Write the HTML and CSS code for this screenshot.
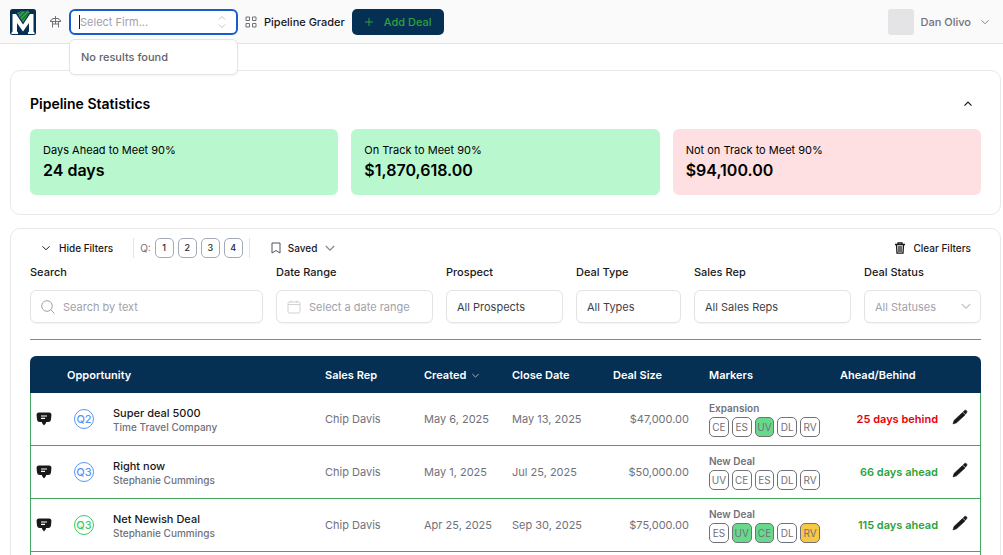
FILE: index.html
```
<!DOCTYPE html>
<html lang="en">
<head>
    <meta charset="UTF-8">
    <meta name="viewport" content="width=device-width, initial-scale=1.0">
    <title>Pipeline Grader</title>
    <link rel="stylesheet" href="styles.css">
</head>
<body>
    <svg class="sprite" aria-hidden="true">
        <symbol id="chevron" viewBox="0 0 10 10"><path d="M1.500 3.300 L5 6.800 L8.500 3.300"/></symbol>
        <symbol id="comment" viewBox="0 0 16 14">
            <path d="M3 .5 H13 Q15.600 .5 15.400 3.200 L15 7.400 Q14.700 10 12.200 10 H10 V11 L8 13.500 L6 11 V10 H3.800 Q1.300 10 1 7.400 L.6 3.200 Q.4 .5 3 .5Z" fill="#18181b"/>
            <path d="M5 4 H11 M5 6.300 H9" stroke="#fff" stroke-width="1.200" fill="none"/>
        </symbol>
        <symbol id="pencil" viewBox="0 0 16 16">
            <path d="M1 15 L2 11.500 L10.500 3.500 L13 6 L4.500 13.800Z M11.200 2.900 L12.600 1.500 Q13.600 .8 14.500 1.700 Q15.400 2.600 14.700 3.600 L13.500 5.200Z" fill="#18181b" stroke="#18181b" stroke-width=".6"/>
        </symbol>
    </svg>

    <header class="topbar">
        <a href="#" class="logo" aria-label="Home">
            <svg width="26" height="26" viewBox="0 0 26 26">
                <rect width="26" height="26" rx="2.500" fill="#062f54"/>
                <path d="M2.500 5 H6 L13 15.500 L20 5 H23.500 V22.500 L24.500 23.500 V25 H18 V23.500 L19 22.500 V14 L13 22.500 L7 14 V22.500 L8 23.500 V25 H1.500 V23.500 L2.500 22.500Z" fill="#fff"/>
                <path d="M7 4 L13 13.500 L19.500 3.500 L18 1.500 L14 2.500 L12 1.500 L9.500 3Z" fill="#2f9e3f"/>
                <path d="M8 6 L13 1.500 M9.700 8.700 L17 1.500 M11.500 11.300 L18.500 4" stroke="#062f54" stroke-width=".8"/>
            </svg>
        </a>
        <svg class="nav-icon" width="13" height="14" viewBox="0 0 13 14">
            <path d="M6.500 1 V3.500 M3.500 3.500 H9.500 M1 5.500 Q3.500 5.500 3.500 3.500 M12 5.500 Q9.500 5.500 9.500 3.500 M1 6.500 H12 M3.500 6.500 V12.500 M9.500 6.500 V12.500 M6.500 3.500 V9 M3.500 9 H9.500"/>
        </svg>
        <div class="firm">
            <input type="text" class="firm-input" placeholder="Select Firm..." aria-label="Select Firm">
            <svg class="firm-arrows" width="10" height="14" viewBox="0 0 10 14"><path d="M2 4.500 L5 1.500 L8 4.500 M2 9.500 L5 12.500 L8 9.500"/></svg>
            <div class="firm-menu">No results found</div>
        </div>
        <svg class="nav-icon" width="12" height="12" viewBox="0 0 12 12">
            <path d="M1 1 H4.500 V4.500 H1Z M7.500 1 H11 V4.500 H7.500Z M1 7.500 H4.500 V11 H1Z M7.500 7.500 H11 V11 H7.500Z"/>
        </svg>
        <a href="#" class="nav-link">Pipeline Grader</a>
        <button type="button" class="add-btn">
            <svg width="10" height="10" viewBox="0 0 10 10"><path d="M5 1 V9 M1 5 H9"/></svg>
            Add Deal
        </button>
        <button type="button" class="user">
            <span class="avatar"></span>
            Dan Olivo
            <svg class="chev" width="10" height="10"><use href="#chevron"/></svg>
        </button>
    </header>

    <main>
        <section class="card stats-card">
            <div class="card-head">
                <h2>Pipeline Statistics</h2>
                <button type="button" class="collapse" aria-label="Collapse">
                    <svg class="chev up" width="10" height="10"><use href="#chevron"/></svg>
                </button>
            </div>
            <div class="stats">
                <div class="stat good"><p>Days Ahead to Meet 90%</p><strong>24 days</strong></div>
                <div class="stat good"><p>On Track to Meet 90%</p><strong>$1,870,618.00</strong></div>
                <div class="stat bad"><p>Not on Track to Meet 90%</p><strong>$94,100.00</strong></div>
            </div>
        </section>

        <section class="card deals-card">
            <div class="toolbar">
                <button type="button" class="tool hide-btn">
                    <svg class="chev dark" width="10" height="10"><use href="#chevron"/></svg>
                    Hide Filters
                </button>
                <div class="quarters">
                    <span>Q:</span>
                    <button type="button">1</button>
                    <button type="button">2</button>
                    <button type="button">3</button>
                    <button type="button">4</button>
                </div>
                <button type="button" class="tool saved-btn">
                    <svg width="10" height="12" viewBox="0 0 10 12"><path d="M1 1 H9 V11 L5 8.500 L1 11Z" fill="none" stroke="#52525b"/></svg>
                    Saved
                    <svg class="chev" width="12" height="12"><use href="#chevron"/></svg>
                </button>
                <button type="button" class="tool clear-btn">
                    <svg width="10" height="12" viewBox="0 0 10 12"><path d="M0 2.500 H10 M3 2.500 V.8 H7 V2.500 M1.500 3 L2 11.200 H8 L8.500 3 M4 4 V10 M6 4 V10" fill="none" stroke="#18181b" stroke-width="1.300"/></svg>
                    Clear Filters
                </button>
            </div>

            <form class="filters">
                <div class="field">
                    <label for="search">Search</label>
                    <div class="control">
                        <svg width="14" height="14" viewBox="0 0 14 14"><circle cx="6" cy="6" r="5.300"/><path d="M9.900 9.900 L13.500 13.500"/></svg>
                        <input type="text" id="search" class="with-icon" placeholder="Search by text">
                    </div>
                </div>
                <div class="field">
                    <label for="dates">Date Range</label>
                    <div class="control">
                        <svg class="light" width="14" height="14" viewBox="0 0 14 14"><rect x="1" y="2" width="12" height="11" rx="1.500"/><path d="M1 4.500 H13 M4 .5 V3 M10 .5 V3"/></svg>
                        <input type="text" id="dates" class="with-icon" placeholder="Select a date range">
                    </div>
                </div>
                <div class="field">
                    <label for="prospect">Prospect</label>
                    <select id="prospect"><option>All Prospects</option></select>
                </div>
                <div class="field">
                    <label for="type">Deal Type</label>
                    <select id="type"><option>All Types</option></select>
                </div>
                <div class="field">
                    <label for="rep">Sales Rep</label>
                    <select id="rep"><option>All Sales Reps</option></select>
                </div>
                <div class="field">
                    <label for="status">Deal Status</label>
                    <div class="control">
                        <select id="status" class="muted"><option>All Statuses</option></select>
                        <svg class="chev caret" width="12" height="12"><use href="#chevron"/></svg>
                    </div>
                </div>
            </form>

            <table class="deals">
                <colgroup>
                    <col class="c-note"><col><col class="c-rep"><col class="c-created"><col class="c-close">
                    <col class="c-size"><col class="c-markers"><col class="c-ahead"><col class="c-edit">
                </colgroup>
                <thead>
                    <tr>
                        <th></th>
                        <th>Opportunity</th>
                        <th>Sales Rep</th>
                        <th>Created <svg class="chev" width="9" height="9"><use href="#chevron"/></svg></th>
                        <th>Close Date</th>
                        <th>Deal Size</th>
                        <th>Markers</th>
                        <th>Ahead/Behind</th>
                        <th></th>
                    </tr>
                </thead>
                <tbody>
                    <tr>
                        <td class="note"><svg width="16" height="14"><use href="#comment"/></svg></td>
                        <td><div class="opp"><span class="quarter">Q2</span><div><b>Super deal 5000</b><small>Time Travel Company</small></div></div></td>
                        <td>Chip Davis</td>
                        <td>May 6, 2025</td>
                        <td>May 13, 2025</td>
                        <td class="num">$47,000.00</td>
                        <td><div class="kind">Expansion</div><div class="markers"><span>CE</span><span>ES</span><span class="on">UV</span><span>DL</span><span>RV</span></div></td>
                        <td class="num behind">25 days behind</td>
                        <td class="edit"><button type="button" aria-label="Edit"><svg width="16" height="16"><use href="#pencil"/></svg></button></td>
                    </tr>
                    <tr>
                        <td class="note"><svg width="16" height="14"><use href="#comment"/></svg></td>
                        <td><div class="opp"><span class="quarter">Q3</span><div><b>Right now</b><small>Stephanie Cummings</small></div></div></td>
                        <td>Chip Davis</td>
                        <td>May 1, 2025</td>
                        <td>Jul 25, 2025</td>
                        <td class="num">$50,000.00</td>
                        <td><div class="kind">New Deal</div><div class="markers"><span>UV</span><span>CE</span><span>ES</span><span>DL</span><span>RV</span></div></td>
                        <td class="num ahead">66 days ahead</td>
                        <td class="edit"><button type="button" aria-label="Edit"><svg width="16" height="16"><use href="#pencil"/></svg></button></td>
                    </tr>
                    <tr>
                        <td class="note"><svg width="16" height="14"><use href="#comment"/></svg></td>
                        <td><div class="opp"><span class="quarter green">Q3</span><div><b>Net Newish Deal</b><small>Stephanie Cummings</small></div></div></td>
                        <td>Chip Davis</td>
                        <td>Apr 25, 2025</td>
                        <td>Sep 30, 2025</td>
                        <td class="num">$75,000.00</td>
                        <td><div class="kind">New Deal</div><div class="markers"><span>ES</span><span class="on">UV</span><span class="on">CE</span><span>DL</span><span class="warn">RV</span></div></td>
                        <td class="num ahead">115 days ahead</td>
                        <td class="edit"><button type="button" aria-label="Edit"><svg width="16" height="16"><use href="#pencil"/></svg></button></td>
                    </tr>
                    <tr><td colspan="9"></td></tr>
                </tbody>
            </table>
        </section>
    </main>
</body>
</html>
```
FILE: styles.css
```
* {
    box-sizing: border-box;
}
html {
    scrollbar-width: none;
}
body {
    margin: 0;
    background: #fff;
    color: #18181b;
    font-family: Inter, sans-serif;
    font-size: 11px;
    line-height: 16px;
}
button, input, select {
    font: inherit;
    color: inherit;
}
button {
    background: none;
    border: none;
    padding: 0;
    cursor: pointer;
}
a {
    color: inherit;
    text-decoration: none;
}
h2, p {
    margin: 0;
}
svg {
    flex: none;
}
.sprite {
    position: absolute;
    width: 0;
    height: 0;
}
.chev {
    fill: none;
    stroke: #85858d;
    stroke-width: 1;
}
.chev.dark {
    stroke: #18181b;
}
.chev.up {
    stroke: #18181b;
    stroke-width: 1.2;
    transform: rotate(180deg);
}

/* top bar */
.topbar {
    display: flex;
    align-items: center;
    gap: 7px;
    height: 44px;
    padding: 0 13px 0 10px;
    background: #fafafa;
    border-bottom: 1px solid #e4e4e7;
}
.logo {
    display: flex;
    margin-right: 6px;
}
.nav-icon {
    fill: none;
    stroke: #71717a;
    stroke-width: 1;
}
.firm {
    position: relative;
    width: 169px;
}
.firm-input {
    display: block;
    width: 100%;
    height: 26px;
    padding: 0 28px 0 9px;
    background: #fff;
    border: 2px solid #155dcc;
    border-radius: 6px;
    outline: none;
}
.firm::before {
    content: '';
    position: absolute;
    top: 6px;
    left: 10px;
    width: 1px;
    height: 14px;
    background: #18181b;
}
.firm-arrows {
    position: absolute;
    top: 6px;
    right: 11px;
    fill: none;
    stroke: #c4c4c9;
}
.firm-menu {
    position: absolute;
    top: 30px;
    left: 0;
    z-index: 5;
    width: 100%;
    padding: 9px 11px;
    background: #fff;
    border: 1px solid #e4e4e7;
    border-radius: 6px;
    box-shadow: 0 1px 2px rgba(0, 0, 0, 0.05);
    color: #63636b;
    font-weight: 500;
}
::placeholder {
    color: #a1a1aa;
    opacity: 1;
}
.nav-link {
    font-weight: 500;
}
.add-btn {
    display: flex;
    align-items: center;
    gap: 10px;
    height: 26px;
    padding: 0 12px;
    background: #062f54;
    border-radius: 5px;
    color: #2ba33b;
    font-weight: 500;
}
.add-btn svg {
    stroke: #2ba33b;
}
.user {
    display: flex;
    align-items: center;
    gap: 7px;
    margin-left: auto;
    color: #71717a;
    font-weight: 500;
}
.user .chev {
    margin-left: 2px;
}
.avatar {
    width: 26px;
    height: 26px;
    background: #e4e4e7;
    border-radius: 3px;
}

/* cards */
main {
    display: flex;
    flex-direction: column;
    gap: 13px;
    padding: 26px 2px 0 10px;
}
.card {
    border: 1px solid #e8e8eb;
    border-radius: 10px;
    padding: 19px;
}
.card-head {
    display: flex;
    justify-content: space-between;
    align-items: center;
    padding: 4px 8px 15px 0;
}
.card-head h2 {
    color: #000;
    font-size: 14px;
    font-weight: 600;
    line-height: 20px;
}
.collapse {
    display: flex;
}
.stats {
    display: grid;
    grid-template-columns: repeat(3, 1fr);
    gap: 13px;
}
.stat {
    padding: 13px;
    border-radius: 6px;
    color: #000;
}
.stat strong {
    display: block;
    font-size: 16px;
    font-weight: 600;
    line-height: 24px;
}
.good {
    background: #b9f8cf;
}
.bad {
    background: #ffe0e2;
}

/* filters */
.deals-card {
    padding-top: 9px;
}
.toolbar {
    display: flex;
    align-items: center;
    height: 20px;
    font-size: 10px;
}
.tool {
    display: flex;
    align-items: center;
    gap: 8px;
    font-weight: 500;
}
.hide-btn {
    padding: 0 20px 0 11px;
}
.quarters {
    display: flex;
    align-items: center;
    gap: 4px;
    height: 20px;
    padding: 0 6px;
    border-left: 1px solid #e4e4e7;
    border-right: 1px solid #e4e4e7;
    color: #71717a;
}
.quarters button {
    width: 19px;
    height: 20px;
    border: 1px solid #a3aab8;
    border-radius: 5px;
    color: #27272a;
    font-size: 9px;
    font-weight: 500;
}
.saved-btn {
    gap: 7px;
    padding-left: 21px;
}
.clear-btn {
    margin-left: auto;
    padding-right: 10px;
}
.filters {
    display: grid;
    grid-template-columns: 233fr 157fr 117fr 105fr 157fr 117fr;
    gap: 13px;
    padding: 6px 0 16px;
    border-bottom: 1px solid #45b162;
}
.field {
    min-width: 0;
}
.field label {
    display: block;
    margin-bottom: 10px;
    font-weight: 500;
}
.field input, .field select {
    display: block;
    width: 100%;
    height: 33px;
    padding: 0 10px;
    appearance: none;
    background: #fff;
    border: 1px solid #e4e4e7;
    border-radius: 6px;
    box-shadow: 0 1px 1px rgba(0, 0, 0, 0.04);
    color: #3f3f46;
}
.field .with-icon {
    padding-left: 32px;
}
.field .muted {
    color: #a1a1aa;
}
.control {
    position: relative;
}
.control svg {
    position: absolute;
    top: 10px;
    left: 11px;
    fill: none;
    stroke: #a1a1aa;
}
.control .light {
    stroke: #d0d0d5;
}
.control .caret {
    left: auto;
    right: 9px;
    stroke: #c4c4c9;
}

/* deals table */
.deals {
    width: 100%;
    margin-top: 16px;
    table-layout: fixed;
    border-collapse: separate;
    border-spacing: 0;
}
.c-note { width: 27px; }
.c-rep { width: 99px; }
.c-created { width: 88px; }
.c-close { width: 101px; }
.c-size { width: 96px; }
.c-markers { width: 131px; }
.c-ahead { width: 118px; }
.c-edit { width: 33px; }
.deals th {
    height: 37px;
    padding: 0 10px;
    background: #062f54;
    color: #fff;
    font-weight: 600;
    text-align: left;
    white-space: nowrap;
}
.deals th:first-child {
    border-top-left-radius: 6px;
}
.deals th:last-child {
    border-top-right-radius: 6px;
}
.deals th .chev {
    margin-left: 2px;
    stroke: #b4bcc8;
    vertical-align: middle;
}
.deals td {
    height: 53px;
    padding: 0 10px;
    border-bottom: 1px solid #45a860;
    color: #71717a;
    white-space: nowrap;
}
.deals td:first-child {
    border-left: 1px solid #45a860;
}
.deals td:last-child {
    border-right: 1px solid #45a860;
}
.deals .note {
    padding: 0 5px;
}
.deals .num {
    text-align: right;
}
.deals .edit {
    padding: 0 4px;
}
.note svg, .edit svg {
    display: block;
}
.opp {
    display: flex;
    align-items: center;
    gap: 19px;
    padding-left: 7px;
}
.opp b {
    display: block;
    color: #18181b;
    font-weight: 500;
}
.opp small {
    display: block;
    font-size: 10px;
    font-weight: 500;
    line-height: 13px;
}
.quarter {
    width: 20px;
    height: 20px;
    border: 1px solid #5696f7;
    border-radius: 50%;
    color: #5696f7;
    font-weight: 500;
    line-height: 18px;
    text-align: center;
}
.quarter.green {
    border-color: #3ccb62;
    color: #3ccb62;
}
.kind {
    font-size: 10px;
    font-weight: 600;
    line-height: 14px;
}
.markers {
    display: flex;
    gap: 3px;
    padding-top: 2px;
}
.markers span {
    width: 20px;
    height: 20px;
    border: 1px solid #71717a;
    border-radius: 5px;
    font-size: 10px;
    line-height: 18px;
    text-align: center;
}
.markers .on {
    background: #68d98a;
}
.markers .warn {
    background: #f7c843;
}
.deals .behind {
    color: #e7000b;
    font-weight: 600;
}
.deals .ahead {
    color: #2ba33b;
    font-weight: 600;
}
```
